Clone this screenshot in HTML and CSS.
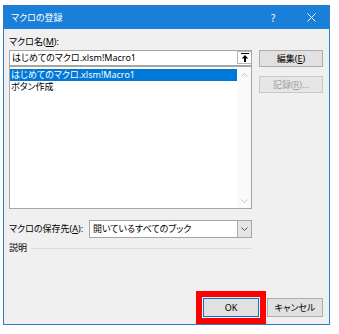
FILE: index.html
```html
<!DOCTYPE html>
<html lang="ja">
<head>
<meta charset="utf-8">
<link rel="stylesheet" href="styles.css">
</head>
<body>
<div class="dialog">
  <div class="titlebar">
    <span class="title">マクロの登録</span>
    <span class="help">?</span>
    <span class="close"><svg width="9" height="9" viewBox="0 0 9 9"><path d="M0.5 0.5L8.5 8.5M8.5 0.5L0.5 8.5" stroke="#fff" stroke-width="1"/></svg></span>
  </div>
  <div class="content">
    <div class="label top-label">マクロ名(<u>M</u>):</div>
    <div class="main">
      <div class="left">
        <div class="textbox">
          <span class="tb-text">はじめてのマクロ.xlsm!Macro1</span>
          <span class="upbtn"><svg width="8" height="9" viewBox="0 0 8 9"><path d="M0 0.5H8" stroke="#000" stroke-width="1"/><path d="M4 2L0.8 5.4H3V9H5V5.4H7.2Z" fill="#000"/></svg></span>
        </div>
        <div class="listbox">
          <div class="items">
            <div class="item selected">はじめてのマクロ.xlsm!Macro1</div>
            <div class="item">ボタン作成</div>
          </div>
          <div class="vscroll">
            <svg width="7" height="4" viewBox="0 0 7 4"><path d="M0.5 3.5L3.5 0.5L6.5 3.5" fill="none" stroke="#c2c2c2" stroke-width="1"/></svg>
            <svg width="7" height="4" viewBox="0 0 7 4"><path d="M0.5 0.5L3.5 3.5L6.5 0.5" fill="none" stroke="#c2c2c2" stroke-width="1"/></svg>
          </div>
        </div>
      </div>
      <div class="side">
        <button class="btn">編集(<u>E</u>)</button>
        <button class="btn disabled">記録(<u>R</u>)...</button>
      </div>
    </div>
    <div class="saverow">
      <span class="label save-label">マクロの保存先(<u>A</u>):</span>
      <div class="combo">
        <span class="combo-text">開いているすべてのブック</span>
        <span class="dd"><svg width="7" height="4" viewBox="0 0 7 4"><path d="M0.5 0.5L3.5 3.5L6.5 0.5" fill="none" stroke="#555" stroke-width="1"/></svg></span>
      </div>
    </div>
    <div class="descrow">
      <span class="label">説明</span>
      <span class="rule"></span>
    </div>
    <div class="footer">
      <button class="btn ok">OK</button>
      <button class="btn">キャンセル</button>
    </div>
  </div>
</div>
</body>
</html>
```
FILE: styles.css
```css
* { box-sizing: border-box; }
html, body { margin: 0; padding: 0; background: #fff; }
body {
  font-family: "Noto Sans", "Noto Sans CJK JP", sans-serif;
  font-size: 9px;
  color: #000;
  font-feature-settings: "palt" 1;
}
u { text-decoration: underline; text-underline-offset: 1px; }

.dialog {
  margin: 5px 0 0 3px;
  width: 327px;
  height: 320px;
  border: 1px solid #2f7cd0;
  background: #f0f0f0;
  display: flex;
  flex-direction: column;
}

.titlebar {
  height: 23px;
  background: #1a7fd8;
  color: #fff;
  display: flex;
  align-items: center;
  padding-left: 7px;
  flex-shrink: 0;
}
.title { font-size: 9px; flex: 1; }
.help { width: 10px; margin-right: 26px; font-size: 10px; font-family: "Noto Sans", sans-serif; }
.close { display: flex; width: 9px; height: 9px; margin-right: 13px; }

.content {
  flex: 1;
  display: flex;
  flex-direction: column;
  padding: 7px 6px 7px 5px;
}

.label { line-height: 12px; height: 12px; white-space: nowrap; }

.main {
  margin-top: 2px;
  display: flex;
  gap: 7px;
}
.left { width: 243px; display: flex; flex-direction: column; }

.textbox {
  height: 16px;
  border: 1px solid #a5a5a5;
  background: #fff;
  display: flex;
  align-items: center;
  padding-left: 2px;
}
.tb-text { flex: 1; line-height: 12px; }
.upbtn {
  width: 14px;
  height: 13px;
  margin-top: -2px;
  border: 1px solid #b9b9b9;
  border-right: none;
  background: #fff;
  display: flex;
  align-items: center;
  justify-content: center;
}

.listbox {
  height: 143px;
  border: 1px solid #a5a5a5;
  background: #fff;
  display: flex;
  padding: 2px 0 0 0;
}
.items { flex: 1; }
.item { height: 12px; line-height: 12px; padding-left: 1px; white-space: nowrap; }
.item.selected { background: #0078d7; color: #fff; margin-left: 0; }
.vscroll {
  width: 14px;
  margin-top: -2px;
  display: flex;
  flex-direction: column;
  justify-content: space-between;
  align-items: center;
  padding: 6px 0 5px;
  background: #fafafa;
}

.side { width: 64px; display: flex; flex-direction: column; gap: 9px; }
.btn {
  font: inherit;
  font-feature-settings: "palt" 1;
  height: 17px;
  padding: 0;
  border: 1px solid #adadad;
  background: #e1e1e1;
  color: #000;
  line-height: 15px;
  white-space: nowrap;
}
.btn.disabled { color: #a0a0a0; border-color: #c8c8c8; background: #e6e6e6; }

.saverow {
  margin-top: 11px;
  height: 18px;
  display: flex;
  align-items: center;
}
.save-label { width: 80px; }
.combo {
  width: 163px;
  height: 18px;
  border: 1px solid #a5a5a5;
  background: #fff;
  display: flex;
  align-items: center;
  padding-left: 3px;
}
.combo-text { flex: 1; line-height: 12px; }
.dd {
  width: 14px;
  height: 16px;
  border-left: 1px solid #adadad;
  background: #e5e5e5;
  display: flex;
  align-items: center;
  justify-content: center;
}

.descrow {
  margin-top: 4px;
  width: 243px;
  display: flex;
  align-items: center;
}
.rule { flex: 1; height: 1px; background: #dcdcdc; margin-left: 4px; }

.footer {
  margin-top: auto;
  display: flex;
  justify-content: flex-end;
  gap: 8px;
}
.footer .btn { width: 56px; height: 19px; line-height: 17px; }
.btn.ok {
  border: 1px solid #0078d7;
  outline: 6px solid #f00;
  outline-offset: 1px;
}
```
